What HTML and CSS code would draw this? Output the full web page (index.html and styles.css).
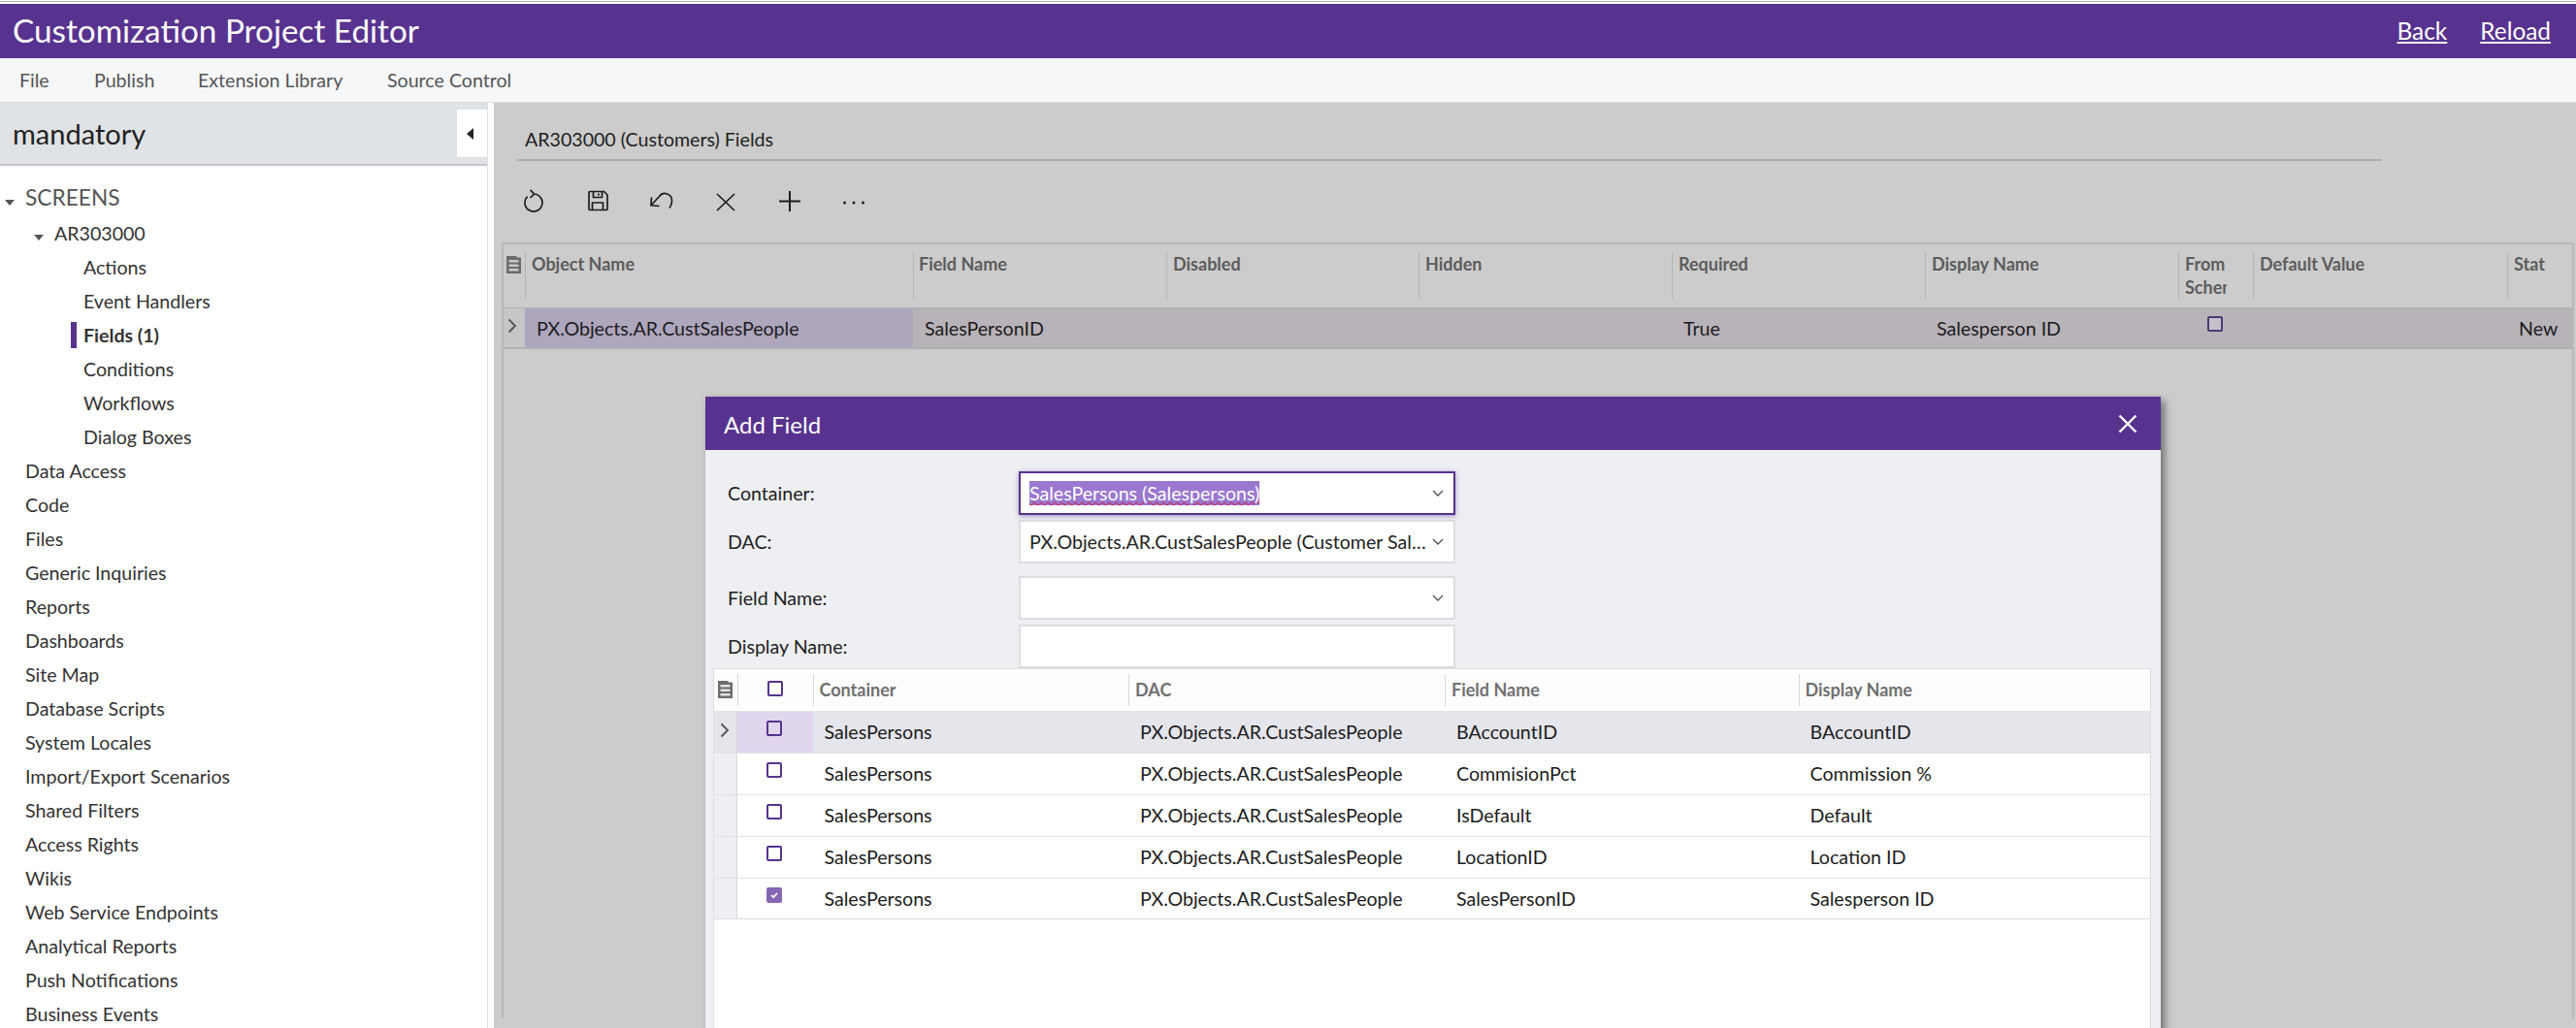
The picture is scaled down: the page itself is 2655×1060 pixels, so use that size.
FILE: index.html
```html
<!DOCTYPE html>
<html lang="en">
<head>
<meta charset="utf-8">
<title>Customization Project Editor</title>
<link rel="stylesheet" href="styles.css">
</head>
<body>
<div class="app">
  <div class="strip"></div>
  <header class="topbar">
    <h1 class="app-title">Customization Project Editor</h1>
    <nav class="top-links"><a>Back</a><a>Reload</a></nav>
  </header>
  <nav class="menubar">
    <span class="m-file">File</span><span class="m-publish">Publish</span><span class="m-ext">Extension Library</span><span>Source Control</span>
  </nav>
  <div class="workspace">
    <aside class="sidebar">
      <div class="project">
        <span class="project-name">mandatory</span>
        <button class="collapse"><svg width="8" height="12" viewBox="0 0 8 12"><path d="M7 0v12L0 6z" fill="#222"/></svg></button>
      </div>
      <ul class="tree">
        <li class="t-root"><i class="caret"></i>SCREENS</li>
        <li class="t-screen"><i class="caret"></i>AR303000</li>
        <li class="t-leaf">Actions</li>
        <li class="t-leaf">Event Handlers</li>
        <li class="t-leaf t-active">Fields (1)</li>
        <li class="t-leaf">Conditions</li>
        <li class="t-leaf">Workflows</li>
        <li class="t-leaf">Dialog Boxes</li>
        <li>Data Access</li>
        <li>Code</li>
        <li>Files</li>
        <li>Generic Inquiries</li>
        <li>Reports</li>
        <li>Dashboards</li>
        <li>Site Map</li>
        <li>Database Scripts</li>
        <li>System Locales</li>
        <li>Import/Export Scenarios</li>
        <li>Shared Filters</li>
        <li>Access Rights</li>
        <li>Wikis</li>
        <li>Web Service Endpoints</li>
        <li>Analytical Reports</li>
        <li>Push Notifications</li>
        <li>Business Events</li>
      </ul>
    </aside>
    <main class="content">
      <h2 class="page-title">AR303000 (Customers) Fields</h2>
      <div class="toolbar">
        <svg class="tool" viewBox="0 0 24 24"><path d="M12 5a9 9 0 1 1-6.400 2.600M8.500 .8 12.500 5 8.500 9"/></svg>
        <svg class="tool" viewBox="0 0 24 24"><path d="M4 2.500h14.500l3.500 3.500v14.500a1 1 0 0 1-1 1H4a1 1 0 0 1-1-1v-17a1 1 0 0 1 1-1zM7.500 2.500v6h9v-6M13 4.500v2M6.500 21.500v-7.500h11v7.500"/></svg>
        <svg class="tool" viewBox="0 0 24 24"><path d="M1.500 8.500 1 16.800l8.500.7M1.300 16.500 9.500 7.500a7.200 7.200 0 0 1 13 4.500c0 3-1 5.500-2.500 7.500"/></svg>
        <svg class="tool" viewBox="0 0 24 24"><path d="M3 5l18 17M21 5 3 22"/></svg>
        <svg class="tool tool-bold" viewBox="0 0 24 24"><path d="M12 2v21M1 12.500h22"/></svg>
        <svg class="tool" viewBox="0 0 24 24"><circle cx="2.500" cy="14" r="1.500" class="dot"/><circle cx="12" cy="14" r="1.500" class="dot"/><circle cx="21.500" cy="14" r="1.500" class="dot"/></svg>
      </div>
      <div class="grid fields-grid">
        <div class="gh gh-icon"><svg class="cabinet" viewBox="0 0 15 18"><path class="cab-body" d="M0 0h10l1 1.500h4V18H0z"/><path class="cab-slot" d="M2.500 4h10v2.500h-10zM2.500 8.500h10V11h-10zM2.500 13h10v2.500h-10z"/></svg></div>
        <div class="gh gh-first">Object Name</div>
        <div class="gh gh-field">Field Name</div>
        <div class="gh">Disabled</div>
        <div class="gh">Hidden</div>
        <div class="gh">Required</div>
        <div class="gh">Display Name</div>
        <div class="gh gh-clip"><span>From</span><span>Schema</span></div>
        <div class="gh">Default Value</div>
        <div class="gh">Stat</div>
        <div class="gc gc-icon"><svg class="chev" viewBox="0 0 10 16"><path d="M1.500 1.500 8 8l-6.500 6.500"/></svg></div>
        <div class="gc gc-sel">PX.Objects.AR.CustSalesPeople</div>
        <div class="gc">SalesPersonID</div>
        <div class="gc"></div>
        <div class="gc"></div>
        <div class="gc">True</div>
        <div class="gc">Salesperson ID</div>
        <div class="gc gc-check"><span class="check check-dim"></span></div>
        <div class="gc"></div>
        <div class="gc">New</div>
      </div>
    </main>
  </div>

  <section class="dialog">
    <header class="dialog-head">
      <span>Add Field</span>
      <svg class="dialog-close" viewBox="0 0 20 20"><path d="M1.500 1.500l17 17M18.500 1.500l-17 17"/></svg>
    </header>
    <div class="dialog-body">
      <form class="form">
        <label>Container:</label>
        <div class="field field-focus"><span class="sel-text">SalesPersons (Salespersons)</span><svg class="drop" viewBox="0 0 12 8"><path d="M1 1l5 5 5-5"/></svg></div>
        <label>DAC:</label>
        <div class="field"><span class="ellip">PX.Objects.AR.CustSalesPeople (Customer Salespersons)</span><svg class="drop" viewBox="0 0 12 8"><path d="M1 1l5 5 5-5"/></svg></div>
        <label class="f-gap">Field Name:</label>
        <div class="field f-gap"><span></span><svg class="drop" viewBox="0 0 12 8"><path d="M1 1l5 5 5-5"/></svg></div>
        <label>Display Name:</label>
        <div class="field"></div>
      </form>
      <div class="grid add-grid">
        <div class="ah ah-icon"><svg class="cabinet" viewBox="0 0 15 18"><path class="cab-body" d="M0 0h10l1 1.500h4V18H0z"/><path class="cab-slot" d="M2.500 4h10v2.500h-10zM2.500 8.500h10V11h-10zM2.500 13h10v2.500h-10z"/></svg></div>
        <div class="ah ah-check"><span class="check"></span></div>
        <div class="ah">Container</div>
        <div class="ah">DAC</div>
        <div class="ah">Field Name</div>
        <div class="ah">Display Name</div>

        <div class="ac ac-icon hot"><svg class="chev" viewBox="0 0 10 16"><path d="M1.500 1.500 8 8l-6.500 6.500"/></svg></div>
        <div class="ac ac-check hot-check"><span class="check"></span></div>
        <div class="ac hot">SalesPersons</div>
        <div class="ac hot">PX.Objects.AR.CustSalesPeople</div>
        <div class="ac hot">BAccountID</div>
        <div class="ac hot">BAccountID</div>

        <div class="ac ac-icon"></div>
        <div class="ac ac-check"><span class="check"></span></div>
        <div class="ac">SalesPersons</div>
        <div class="ac">PX.Objects.AR.CustSalesPeople</div>
        <div class="ac">CommisionPct</div>
        <div class="ac">Commission %</div>

        <div class="ac ac-icon"></div>
        <div class="ac ac-check"><span class="check"></span></div>
        <div class="ac">SalesPersons</div>
        <div class="ac">PX.Objects.AR.CustSalesPeople</div>
        <div class="ac">IsDefault</div>
        <div class="ac">Default</div>

        <div class="ac ac-icon"></div>
        <div class="ac ac-check"><span class="check"></span></div>
        <div class="ac">SalesPersons</div>
        <div class="ac">PX.Objects.AR.CustSalesPeople</div>
        <div class="ac">LocationID</div>
        <div class="ac">Location ID</div>

        <div class="ac ac-icon ac-last"></div>
        <div class="ac ac-check ac-last"><span class="check check-on"><svg viewBox="0 0 12 12"><path d="M3 6.200l2.200 2L9 4"/></svg></span></div>
        <div class="ac ac-last">SalesPersons</div>
        <div class="ac ac-last">PX.Objects.AR.CustSalesPeople</div>
        <div class="ac ac-last">SalesPersonID</div>
        <div class="ac ac-last">Salesperson ID</div>
      </div>
    </div>
  </section>
</div>
</body>
</html>
```
FILE: styles.css
```css
* { box-sizing: border-box; }
html, body { margin: 0; height: 100%; overflow: hidden; background: #fff; }
body { font-family: Lato, "Open Sans", sans-serif; color: #222; }

.app { position: relative; height: 1060px; display: flex; flex-direction: column; overflow: hidden; }

.strip { height: 4px; flex: none; background: linear-gradient(#fff 0 1px, #adadb3 1px 2px, #fff 2px 4px); }

.topbar { height: 56px; background: #57338f; color: #fff; display: flex; align-items: center; justify-content: space-between; padding: 0 26px 2px 13px; flex: none; }
.app-title { margin: 0; font-size: 33.300px; font-weight: 400; }
.top-links { display: flex; gap: 34px; font-size: 24.400px; }
.top-links a { text-decoration: underline; }

.menubar { height: 46px; flex: none; background: #f6f7f9; border-bottom: 1px solid #dcdde0; display: flex; align-items: center; padding-left: 20px; font-size: 19.600px; color: #555; }
.m-file { width: 77px; }
.m-publish { width: 107px; }
.m-ext { width: 195px; }

.workspace { flex: 1; display: flex; min-height: 0; }

.sidebar { width: 503px; flex: none; background: #fff; border-right: 1px solid #dfe0e2; }
.project { height: 65px; background: #e0e3e6; border-bottom: 2px solid #c4c6c9; display: flex; justify-content: space-between; align-items: flex-start; padding-left: 13px; }
.project-name { font-size: 29px; line-height: 64px; }
.collapse { width: 31px; height: 49px; margin-top: 7px; border: 0; padding: 0 4px 0 0; background: #fff; display: flex; align-items: center; justify-content: center; }

.tree { list-style: none; margin: 0; padding: 15px 0 0 26px; font-size: 19.600px; color: #333; }
.tree li { height: 35px; line-height: 35px; white-space: nowrap; position: relative; }
.tree .t-root { height: 36px; font-size: 22.700px; color: #555; }
.tree .t-screen { padding-left: 30px; height: 35.500px; line-height: 37px; }
.tree .t-leaf { padding-left: 60px; }
.tree .t-active { font-weight: 700; }
.tree .t-active::before { content: ""; position: absolute; left: 47px; top: 4px; width: 6px; height: 27px; background: #57338f; }
.caret { position: absolute; width: 0; height: 0; border-left: 5px solid transparent; border-right: 5px solid transparent; border-top: 6px solid #555; top: 20px; }
.t-root .caret { left: -21px; }
.t-screen .caret { left: 9px; }

.content { flex: 1; min-width: 0; background: #ccc; border-left: 6px solid #fff; padding: 0 2px 0 8px; }
.page-title { margin: 0 0 0 16px; width: 1922px; height: 60px; padding: 20px 0 0 8px; font-size: 19.600px; line-height: 36px; font-weight: 400; color: #222; border-bottom: 2px solid #adadad; }
.toolbar { height: 84px; display: flex; align-items: center; gap: 42px; padding: 0 0 2px 21px; }
.tool { width: 24px; height: 24px; flex: none; fill: none; stroke: #1c1c1c; stroke-width: 1.700; }
.tool-bold { stroke-width: 2; }
.tool .dot { fill: #1c1c1c; stroke: none; }

.grid { display: grid; }
.fields-grid { grid-template-columns: 22px 400px 261px 260px 261px 261px 261px 77px 262px 1fr; grid-template-rows: 65px 43px; border-top: 2px solid #b8b8b8; border-left: 2px solid #b8b8b8; border-right: 2px solid #b8b8b8; min-height: 800px; align-content: start; }
.gh { margin: 8px 0 9px; padding: 0 6px; height: 48px; border-left: 1px solid #b4b4b4; font-size: 18px; line-height: 24px; font-weight: 700; color: #5c5c5c; overflow: hidden; }
.gh-icon { border-left: 0; padding: 3px 0 0 3px; }
.gh-field { padding-left: 5px; }
.gh-clip span { display: block; width: 43px; overflow: hidden; white-space: nowrap; }
.gc { background: #b8b3b9; border-top: 1px solid #b2b0b5; border-bottom: 2px solid #b2b0b5; padding-left: 12px; font-size: 19.600px; line-height: 41px; color: #1c1c1c; white-space: nowrap; overflow: hidden; }
.gc-icon { background: #c6c6c6; padding: 10px 0 0 4px; line-height: 0; }
.gc-sel { background: #aea6bc; }
.gc-check { padding: 8px 0 0 30px; line-height: 0; }

.cabinet { width: 15px; height: 18px; }
.cab-body { fill: #6c6c6c; }
.cab-slot { fill: #e4e4e4; }
.gh-icon .cab-slot { fill: #c8c8c8; }
.chev { width: 10px; height: 16px; fill: none; stroke: #555; stroke-width: 1.900; }
.check { display: inline-block; width: 16px; height: 16px; border: 2px solid #57338f; border-radius: 2px; background: #fff; }
.hot-check .check { background: #e0d6ee; }
.check-dim { background: #c4c0ca; border-color: #4a3a72; }
.check-on { background: #8566b3; border-color: #8566b3; }
.check-on svg { display: block; width: 12px; height: 12px; fill: none; stroke: #fff; stroke-width: 1.800; }

.dialog { position: absolute; left: 727px; top: 409px; width: 1500px; height: 800px; background: #eeeff2; box-shadow: 4px 4px 8px rgba(0,0,0,.45); }
.dialog-head { height: 55px; background: #57338f; color: #fff; display: flex; align-items: center; justify-content: space-between; padding: 2px 24px 0 19px; font-size: 24px; }
.dialog-close { width: 20px; height: 20px; margin-top: -2px; fill: none; stroke: #fff; stroke-width: 2.400; }
.dialog-body { padding: 22px 10px 0 8px; }

.form { display: grid; grid-template-columns: 315px 450px; grid-template-rows: 45px 45px 53px 45px; row-gap: 5px; margin: 0; }
.form label { padding-left: 15px; font-size: 19.600px; line-height: 45px; color: #222; }
.form .f-gap { margin-top: 8px; }
.field { height: 45px; background: #fff; border: 2px solid #dcdde1; display: flex; align-items: center; justify-content: space-between; padding: 0 10px 0 9px; font-size: 19.600px; color: #222; }
.field-focus { border-color: #57338f; box-shadow: 0 1px 5px rgba(87,51,143,.5); }
.sel-text { background: #9a78d0; color: #fff; line-height: 25px; text-decoration: underline wavy #d4103c 1px; }
.ellip { flex: 1; min-width: 0; white-space: nowrap; overflow: hidden; text-overflow: ellipsis; margin-right: 5px; }
.drop { width: 12px; height: 8px; flex: none; fill: none; stroke: #555; stroke-width: 1.400; }

.add-grid { grid-template-columns: 24px 77.500px 325.500px 326px 364.500px 362.500px; grid-template-rows: 43px repeat(5, 43px); background: #fff; border: 1px solid #dcdde1; border-bottom: 0; height: 600px; align-content: start; }
.ah { background: #fdfdfd; margin: 5px 0; border-left: 1px solid #d8d8dc; padding-left: 6px; font-size: 18px; line-height: 32px; font-weight: 700; color: #707070; }
.ah-icon { border-left: 0; padding: 7px 0 0 4px; line-height: 0; }
.ah-check { padding: 7px 0 0 30px; line-height: 0; }
.ac { border-top: 1px solid #e2e2e6; padding-left: 12px; font-size: 19.600px; line-height: 41px; color: #1c1c1c; white-space: nowrap; }
.ac-last { border-bottom: 1px solid #dcdcdf; }
.ac-icon { background: #eeeff2; padding: 11px 0 0 6px; line-height: 0; border-right: 1px solid #d8d8dc; }
.ac-check { padding: 9px 0 0 30px; line-height: 0; }
.hot { background: #e5e5ec; }
.ac-icon.hot { background: #e5e5ec; }
.hot-check { background: #e0d6ee; }
```
